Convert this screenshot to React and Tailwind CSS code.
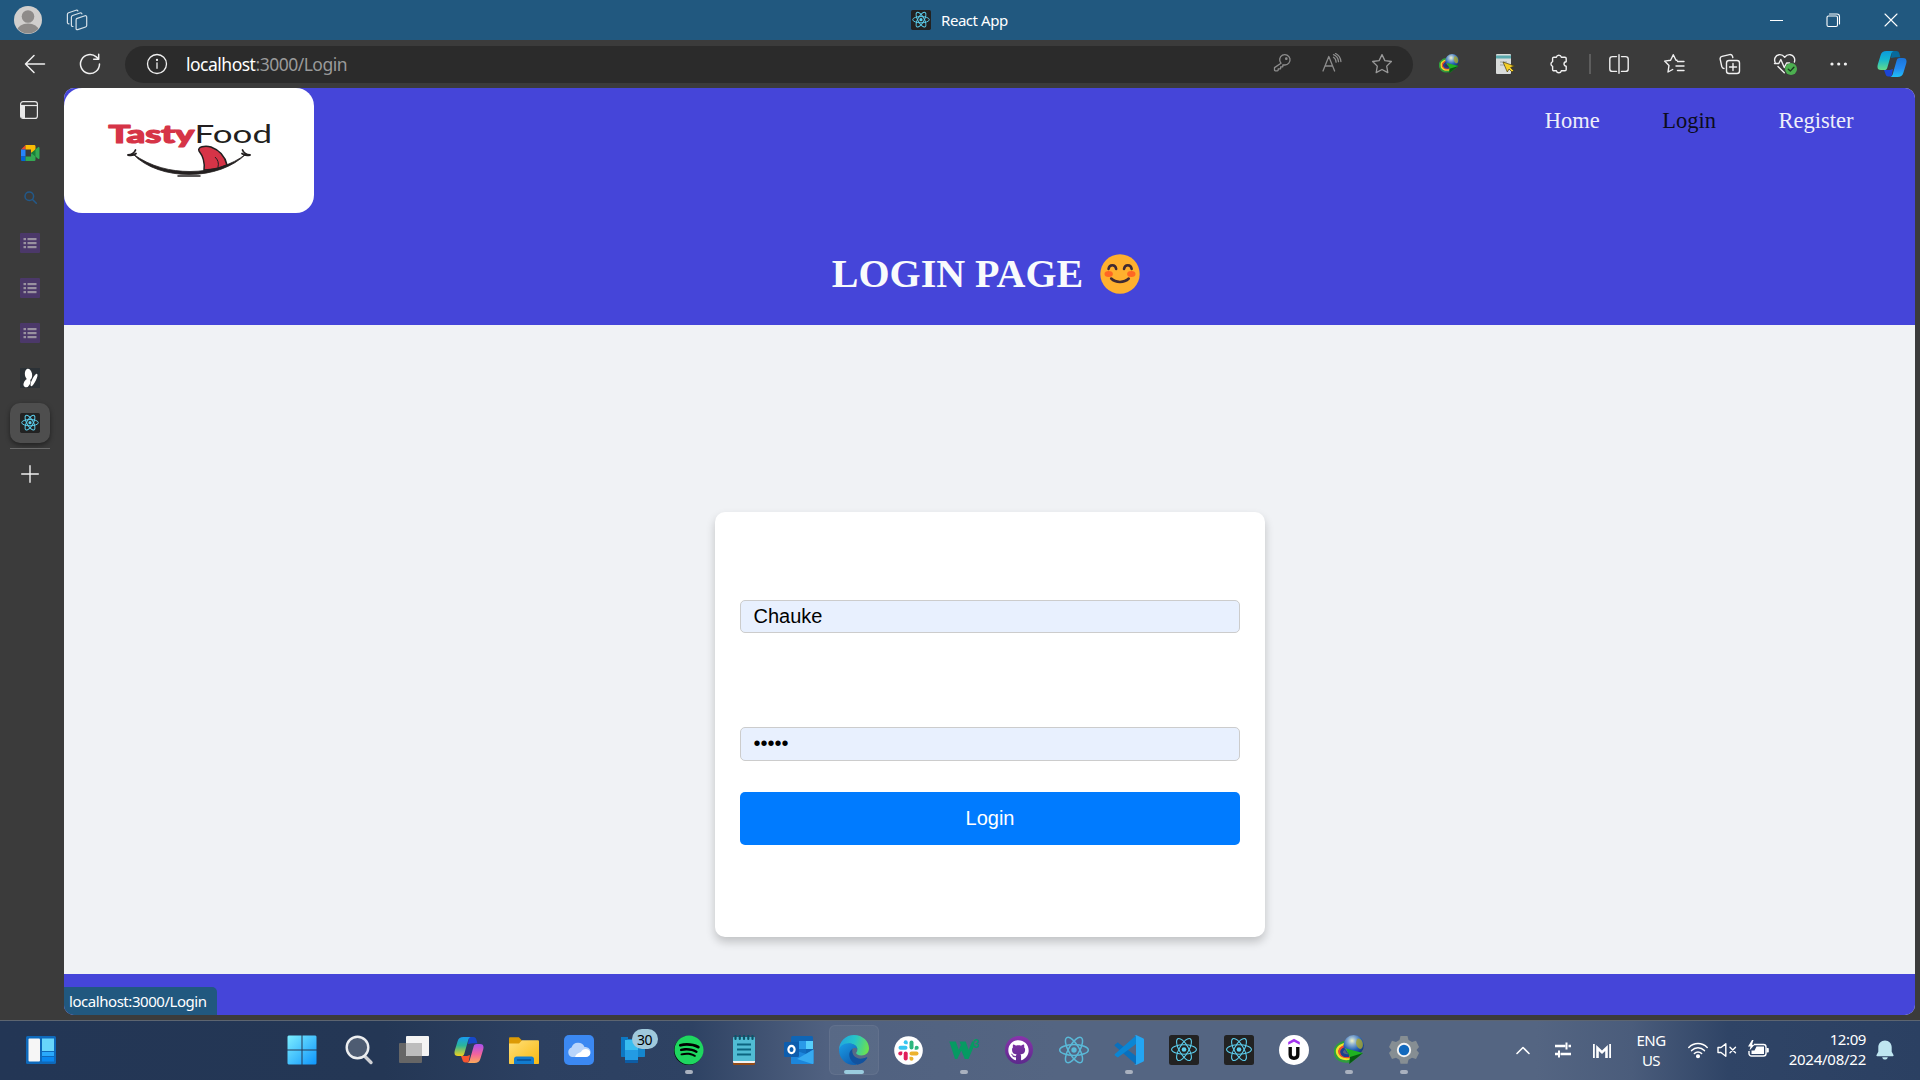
import React from "react";
import { FaSpotify, FaGithub } from "react-icons/fa";

const UI = "font-['Noto_Sans','Open_Sans',sans-serif]";

function Slot({ w, children, className = "" }) {
  return (
    <div className={"flex h-full shrink-0 items-center justify-center " + className} style={{ width: w }}>
      {children}
    </div>
  );
}

function Line({ size = 20, box = 20, color = "#f0f0f0", sw = 1.3, children, className = "" }) {
  return (
    <svg
      width={size}
      height={size}
      viewBox={`0 0 ${box} ${box}`}
      fill="none"
      stroke={color}
      strokeWidth={sw}
      strokeLinecap="round"
      strokeLinejoin="round"
      className={"shrink-0 " + className}
    >
      {children}
    </svg>
  );
}

function ReactLogo({ size, tile = true, sw = 1.3 }) {
  return (
    <svg width={size} height={size} viewBox="0 0 30 30" className="shrink-0">
      {tile && <rect width="30" height="30" rx="2.5" fill="#222222" />}
      <g fill="none" stroke="#5ccfee" strokeWidth={sw} transform={tile ? "translate(15 14.5) scale(.87)" : "translate(15 15)"} opacity={tile ? 1 : 0.8}>
        <ellipse rx="14.3" ry="5.4" />
        <ellipse rx="14.3" ry="5.4" transform="rotate(60)" />
        <ellipse rx="14.3" ry="5.4" transform="rotate(120)" />
        <circle r="2.7" fill="#5ccfee" stroke="none" />
      </g>
    </svg>
  );
}

function Copilot({ size, id, fold, colors }) {
  const [a, b, c, d, e, f] = colors;
  return (
    <svg width={size} height={size} viewBox="0 0 30 30" className="shrink-0">
      <defs>
        <linearGradient id={id + "l"} x1="0" y1="0" x2="0" y2="1">
          <stop offset="0" stopColor={a} />
          <stop offset=".45" stopColor={b} />
          <stop offset="1" stopColor={c} />
        </linearGradient>
        <linearGradient id={id + "r"} x1="0" y1="0" x2="0" y2="1">
          <stop offset="0" stopColor={d} />
          <stop offset=".55" stopColor={e} />
          <stop offset="1" stopColor={f} />
        </linearGradient>
      </defs>
      <path d="M15 2h4.2c2 0 2.8 1.200 3.300 3l.9 3.200h-4.800L14 9z" fill={fold[0]} />
      <path d="M7 21h6l3-1-1.500 7.500h-3.200c-1.700 0-2.500-1.200-3-3z" fill={fold[1]} />
      <path d="M9.500 2H17c-1.500 0-2.300 1.300-2.900 3.400l-3.800 13.300c-.5 1.600-1.300 2.400-3 2.400H4C.8 21.100-.1 19 .8 15.600L3.600 6.200C4.500 3.300 6.300 2 9.500 2z" fill={`url(#${id}l)`} />
      <path d="M20.500 28H13c1.500 0 2.300-1.300 2.900-3.400l3.800-13.300c.5-1.600 1.300-2.400 3-2.400H26c3.200 0 4.100 2.100 3.200 5.500l-2.800 9.400C25.500 26.700 23.700 28 20.500 28z" fill={`url(#${id}r)`} />
    </svg>
  );
}

function Globe({ size, id }) {
  return (
    <svg width={size} height={size} viewBox="0 0 30 30" className="shrink-0">
      <defs>
        <radialGradient id={id} cx=".42" cy=".28" r=".75">
          <stop offset="0" stopColor="#f4f5c8" />
          <stop offset=".25" stopColor="#8fb2d0" />
          <stop offset=".6" stopColor="#2763b8" />
          <stop offset="1" stopColor="#102c66" />
        </radialGradient>
      </defs>
      <g fill="none">
        <path d="M12 7C3 8-.8 14 1.500 20c2 5.500 8 7.500 14.500 6" stroke="#2f9f3d" strokeWidth="2.400" />
        <path d="M12 9C5 10 1.800 14.500 3.600 18.800c1.800 4 6.400 5.800 12.400 4.700" stroke="#ece528" strokeWidth="2.600" />
        <path d="M12 11c-5.500 1-7.500 4-6.300 7.100 1.300 3 5.300 4.500 10.300 3.600" stroke="#ee4d30" strokeWidth="2.400" />
        <path d="M12 13c-4.500 1-5 4-4 5.500 1 1.800 4 2.500 7 2" stroke="#1d3f8f" strokeWidth="2.800" />
      </g>
      <circle cx="19.700" cy="10.300" r="10.200" fill={`url(#${id})`} />
      <path d="M23 4c2-1.500 4 0 5 2s1.500 6-.5 7.500-4-1-5-3.500 0-4 .5-6zM11 13c2 1 5 1.500 6 4l-3 1z" fill="#a8a62d" opacity=".8" />
      <path d="M12 13.500l17 4.500-13.800 11 .8-7z" fill="#1fb322" />
      <path d="M16 22l13-4-13.800 11z" fill="#075a12" />
    </svg>
  );
}

function TitleBar() {
  return (
    <div className={"flex h-10 w-full shrink-0 bg-[#21587f] " + UI}>
      <div className="flex w-[911px] shrink-0 items-center pl-[14px]">
        <svg width="28" height="28" viewBox="0 0 28 28" className="shrink-0">
          <defs>
            <clipPath id="avatar">
              <circle cx="14" cy="14" r="13.600" />
            </clipPath>
          </defs>
          <circle cx="14" cy="14" r="14" fill="#d1cfcd" />
          <g fill="#8e8b89" clipPath="url(#avatar)">
            <circle cx="14" cy="10.500" r="6.300" />
            <ellipse cx="14" cy="24" rx="10.500" ry="6.500" />
          </g>
        </svg>
        <Line size={22} box={22} color="#d5e0e8" sw={1.200} className="ml-[24px]">
          <path d="M10.500 9.600l8.500-2.800c1.100-.3 1.700.1 1.700 1.200v8.500c0 .8-.4 1.300-1.100 1.500l-7.900 2.600c-1 .3-1.600-.1-1.600-1.100v-8.400c0-.8.100-1.200.4-1.500z" />
          <path d="M7 17.500c-1 .1-1.600-.3-1.600-1.200V8.200c0-.9.400-1.400 1.200-1.700L14 4c1-.3 1.700 0 1.900.8" />
          <path d="M3 14.800c-1 .1-1.600-.3-1.600-1.200V5.400c0-.9.400-1.400 1.200-1.700L10 1.200c1-.3 1.600 0 1.900.8" />
        </Line>
      </div>
      <div className="flex w-[98px] items-center gap-[10px]">
        <ReactLogo size={20} sw={1.600} />
        <span className="whitespace-nowrap pt-px text-[15px] tracking-[-0.450px] text-white">React App</span>
      </div>
      <div className="flex flex-1 justify-end">
        <Slot w={57}>
          <div className="h-px w-[13px] bg-white" />
        </Slot>
        <Slot w={57}>
          <Line size={15} box={15} color="#fff" sw={1.100}>
            <rect x="1" y="3" width="10.500" height="10.500" rx="1.500" />
            <path d="M3.500 1h7.500c1.600 0 2.500 1 2.500 2.500V11" />
          </Line>
        </Slot>
        <Slot w={58}>
          <Line size={14} box={14} color="#fff" sw={1.100}>
            <path d="M1 1l12 12M13 1L1 13" />
          </Line>
        </Slot>
      </div>
    </div>
  );
}

function Toolbar() {
  return (
    <div className={"flex h-12 w-full shrink-0 items-center bg-[#3b3b3b] " + UI}>
      <Slot w={70} className="pb-px">
        <Line size={22} box={22} sw={1.500}>
          <path d="M20.500 11H1.500M10 2.500L1.500 11l8.500 8.500" />
        </Line>
      </Slot>
      <Slot w={40}>
        <Line size={22} box={22} sw={1.500}>
          <path d="M20.500 11a9.500 9.500 0 1 1-3.200-7.100L19.700 6M19.700 1.300V6.300h-5" />
        </Line>
      </Slot>
      <div className="ml-[15px] flex h-[37px] w-[1288px] shrink-0 items-center rounded-full bg-[#2b2b2b] pr-[6px] pl-[21px]">
        <Line size={22} box={22} sw={1.300}>
          <circle cx="11" cy="11" r="9.500" />
          <path d="M11 9.800v5.500" />
          <circle cx="11" cy="6.900" r=".5" fill="#fff" />
        </Line>
        <div className="ml-[18px] whitespace-nowrap text-[17.500px] leading-6 tracking-[-0.500px] text-[#9a9a9a]">
          <span className="text-white">localhost</span>:3000/Login
        </div>
        <div className="ml-auto flex">
          <Slot w={51}>
            <Line size={20} color="#8d8d8d">
              <path d="M8 11.300A5.200 5.200 0 1 1 11.600 13H9.800v1.800H7.600v2H5.200v1.200c0 .5-.3.800-.8.800H2.300c-.5 0-.8-.3-.8-.8v-2.400z" transform="translate(1 -1)" />
              <circle cx="14.300" cy="5.700" r=".7" fill="#8d8d8d" />
            </Line>
          </Slot>
          <Slot w={50}>
            <Line size={20} color="#8d8d8d">
              <path d="M1 18L6.800 3.500 12.600 18M3 13h7.500M11.500 4.200c1.500.8 2.500 2.500 2.600 5M11.500 1.600c2.800 1 4.700 3.700 5 7M13.500.5c3.200 1.400 5 4.200 5.400 8" />
            </Line>
          </Slot>
          <Slot w={50}>
            <Line size={22} box={22} color="#9a9a9a">
              <path d="M11 1.600l2.900 6 6.500.9-4.700 4.600 1.100 6.500L11 16.500l-5.800 3.100 1.100-6.500L1.600 8.500l6.500-.9z" />
            </Line>
          </Slot>
        </div>
      </div>
      <div className="flex h-full flex-1 items-center pl-[9px]">
        <Slot w={54}>
          <Globe size={20} id="gl1" />
        </Slot>
        <Slot w={53}>
          <svg width="20" height="20" viewBox="0 0 20 20" className="ml-1">
            <rect x="1" y="0" width="15" height="20" rx="1" fill="#d9dcdb" />
            <rect x="1" y="1.500" width="15" height="3" fill="#5aa9ad" />
            <path d="M5 8h7M5 11h5" stroke="#9da3a3" />
            <path d="M8 8l11.500 4-4 1.500 3 3-1.500 1.500-3-3-1.700 3z" fill="#f5cf28" stroke="#473c10" strokeWidth=".7" />
          </svg>
        </Slot>
        <Slot w={60}>
          <Line size={20} sw={1.400}>
            <path d="M7.400 3.200a2.500 2.500 0 0 1 4.900 0h3.600c.8 0 1.300.5 1.300 1.300v3.300a2.200 2.200 0 1 0 0 4.400v3.300c0 .8-.5 1.300-1.300 1.300h-3.600a2.500 2.500 0 0 1-4.900 0H4.900c-.8 0-1.300-.5-1.300-1.300v-3.200a2.500 2.500 0 0 1 0-4.700V4.500c0-.8.500-1.300 1.300-1.300z" />
          </Line>
        </Slot>
        <div className="h-5 w-[2px] bg-[#5d5d5d]" />
        <Slot w={55}>
          <Line size={20} sw={1.400}>
            <path d="M7.500 2.600h-4C1.800 2.600.8 3.500.8 5.100v9.800c0 1.600 1 2.500 2.700 2.500h4M12.500 2.600h4c1.700 0 2.700.9 2.700 2.500v9.800c0 1.600-1 2.500-2.700 2.500h-4M10 .8v18.500" />
          </Line>
        </Slot>
        <Slot w={56}>
          <Line size={22} box={22} sw={1.400}>
            <path d="M14 7.300l-1-.1-2.700-5.500-2.700 5.500-6 .9 4.400 4.300-1 6.600 4.700-2.500M14.500 8.500H21M13 13h8M14.500 17.500H21" />
          </Line>
        </Slot>
        <Slot w={55}>
          <Line size={22} box={22} sw={1.400}>
            <rect x="7.500" y="7.500" width="13" height="13" rx="2.500" />
            <path d="M14 10.500v7M10.500 14h7M5 15.500c-1.200-.1-1.900-.8-2.200-1.900L1.200 6.300c-.3-1.500.3-2.500 1.800-2.900l7.500-1.800c1.500-.3 2.500.3 3 1.700l.3 1.200" />
          </Line>
        </Slot>
        <Slot w={56}>
          <Line size={25} box={25} sw={1.400}>
            <path d="M2.300 11C.5 7 2.500 3.300 6 2.700c2.500-.4 4.300.8 5.700 2.600 1.400-1.800 3.200-3 5.700-2.600 3.500.6 5 4 4 7.300M1.500 11.500h4.300l2-4 3.500 8 2.300-4.500h3M5 14.500l6.300 6.200" />
            <circle cx="18" cy="17" r="6" fill="#4caf50" stroke="none" />
            <path d="M15.300 17.200l2 1.900 3.600-3.900" stroke="#1c3a20" />
          </Line>
        </Slot>
        <Slot w={52}>
          <svg width="18" height="4" viewBox="0 0 18 4" fill="#f0f0f0">
            <circle cx="2" cy="2" r="1.600" />
            <circle cx="8.700" cy="2" r="1.600" />
            <circle cx="15.400" cy="2" r="1.600" />
          </svg>
        </Slot>
        <Slot w={54}>
          <Copilot size={30} id="cpt" fold={["#076a9b", "#1b45d8"]} colors={["#0b9bdc", "#15b6cf", "#66dc87", "#1a73d9", "#2489f0", "#1fc0f8"]} />
        </Slot>
      </div>
    </div>
  );
}

function ListTile() {
  return (
    <svg width="20" height="20" viewBox="0 0 20 20">
      <rect width="20" height="20" rx="1" fill="#4b3869" />
      <g fill="#99929f">
        <rect x="3.500" y="5" width="2.500" height="2.200" />
        <rect x="7.500" y="5" width="9" height="2.200" />
        <rect x="3.500" y="9" width="2.500" height="2.200" />
        <rect x="7.500" y="9" width="9" height="2.200" />
        <rect x="3.500" y="13" width="2.500" height="2.200" />
        <rect x="7.500" y="13" width="9" height="2.200" />
      </g>
    </svg>
  );
}

function SideBar() {
  const row = "flex h-[45px] shrink-0 items-center justify-center";
  return (
    <div className="flex w-16 shrink-0 flex-col bg-[#3b3b3b] pr-1">
      <div className="flex h-11 items-center justify-center">
        <svg width="18" height="18" viewBox="0 0 18 18" fill="none" stroke="#e8e8e8" strokeWidth="1.200" className="mr-[2px]">
          <rect x=".6" y=".6" width="16.800" height="16.800" rx="2.500" />
          <path d="M.6 4.500h16.800" />
          <path d="M1 4.500h4v12.500H2.500L1 16z" fill="#e8e8e8" stroke="none" />
        </svg>
      </div>
      <div className="flex h-[43px] items-center justify-center pb-[2px]">
        <svg width="20" height="16" viewBox="0 0 20 16">
          <path d="M1 4.500L5.500 0v4.500z" fill="#ea4335" />
          <path d="M5.500 0h8.500c1 0 1.500.5 1.500 1.500V6L11 8V4.500H5.500z" fill="#fbbc04" />
          <path d="M1 4.500h4.500v7H1z" fill="#2684fc" />
          <path d="M1 11.500h4.500V16H2.300C1.500 16 1 15.500 1 14.700z" fill="#0066da" />
          <path d="M5.500 11.500H11V8l4.500 2v4.500c0 1-.5 1.500-1.500 1.500H5.500z" fill="#34a853" />
          <path d="M11 8l7-5.700c.6-.5 1.400-.2 1.400.7v10c0 .9-.8 1.200-1.400.7z" fill="#188038" />
          <path d="M15.500 4.500l2.700-2.200c.6-.5 1.200-.2 1.200.7v10c0 .9-.6 1.200-1.200.7l-2.700-2.200z" fill="#34a853" />
        </svg>
      </div>
      <div className={row}>
        <Line size={13} box={13} color="#22598a" sw={1.500}>
          <circle cx="5.300" cy="5.300" r="4.300" />
          <path d="M8.500 8.500l3.800 3.800" />
        </Line>
      </div>
      <div className={row}><ListTile /></div>
      <div className={row}><ListTile /></div>
      <div className={row}><ListTile /></div>
      <div className={row}>
        <svg width="20" height="20" viewBox="0 0 20 20">
          <rect width="20" height="20" fill="#2b3136" />
          <ellipse cx="8.500" cy="6.500" rx="3.600" ry="5.800" fill="#fff" transform="rotate(-10 8.500 6.500)" />
          <ellipse cx="7" cy="15" rx="3" ry="4.500" fill="#fff" transform="rotate(28 7 15)" />
          <ellipse cx="14" cy="12" rx="1.900" ry="6.800" fill="#fff" transform="rotate(27 14 12)" />
        </svg>
      </div>
      <div className={row}>
        <div className="flex size-10 items-center justify-center rounded-[10px] bg-[#4e4e4e] shadow-[0_2px_5px_rgba(0,0,0,0.45)]">
          <ReactLogo size={20} sw={1.700} />
        </div>
      </div>
      <div className="mt-[3px] h-px w-10 self-center bg-[#6a6a6a]" />
      <div className="flex h-12 items-center justify-center pt-px">
        <Line size={18} box={18} sw={1.400} className="mr-px">
          <path d="M9 .7v16.600M.7 9h16.600" />
        </Line>
      </div>
    </div>
  );
}

function TastyFoodLogo() {
  return (
    <svg width="250" height="125" viewBox="0 0 250 125" className="rounded-[18px] bg-white">
      <g fontFamily="Lato, 'Open Sans', sans-serif">
        <text x="44.500" y="54.500" fontSize="25" fontWeight="900" fill="#d63447" stroke="#d63447" strokeWidth="1.200" strokeLinejoin="round" textLength="86" lengthAdjust="spacingAndGlyphs">
          Tasty
        </text>
        <text x="130.500" y="55" fontSize="25.500" fontWeight="400" fill="#231f20" textLength="77.500" lengthAdjust="spacingAndGlyphs">
          Food
        </text>
      </g>
      <path d="M135 63c-2-4 6-6 12-4 8 3 14 9 16 18-7 4-14 5-23 5 1-8-1-14-5-19z" fill="#d63447" stroke="#231f20" strokeWidth="1.500" />
      <path d="M151 69c3 3 4 6 3 10" fill="none" stroke="#231f20" strokeWidth="1" />
      <path d="M69 66c18 13 38 17.500 57 17.500 22 0 42-6.500 56-17.500-13 13-34 20.500-57 20.500-21 0-43-6.500-56-20.500z" fill="#231f20" stroke="#231f20" strokeWidth=".8" />
      <path d="M64 67c4-.5 6.500-2.500 7.500-5M64 67c3 .7 6 .3 8-1.500M186 67c-4-.5-6.500-2.500-7.500-5M186 67c-3 .7-6 .3-8-1.500" fill="none" stroke="#231f20" strokeWidth="1.800" strokeLinecap="round" />
      <path d="M114 88h22" stroke="#231f20" strokeWidth="1.500" strokeLinecap="round" />
    </svg>
  );
}

function Smile() {
  return (
    <svg width="40" height="40" viewBox="0 0 40 40" className="shrink-0">
      <circle cx="20" cy="20" r="19.700" fill="#ffb02e" />
      <ellipse cx="8.700" cy="20" rx="4.200" ry="3" fill="#ff6723" />
      <ellipse cx="31.300" cy="20" rx="4.200" ry="3" fill="#ff6723" />
      <g fill="none" stroke="#402a32" strokeWidth="2.500" strokeLinecap="round">
        <path d="M8.500 15c.7-5 7-5 7.700 0M24 15c.7-5 7-5 7.700 0M11.200 24.500c4.500 4.500 13 4.500 17.600 0" />
      </g>
    </svg>
  );
}

function WebPage() {
  const field = "flex w-[500px] shrink-0 items-start rounded-[5px] border border-[#ccc] bg-[#e8f0fe] px-[13px] text-[20px] leading-[30px] text-black";
  return (
    <div className="relative flex h-[927px] w-[1851px] shrink-0 flex-col overflow-hidden rounded-[10px] bg-[#f0f2f5]">
      <header className="flex h-[237px] shrink-0 flex-col bg-[#4545d9] font-['Liberation_Serif',serif]">
        <div className="flex h-[125px] justify-between">
          <TastyFoodLogo />
          <nav className="mr-[61.500px] flex gap-[62.500px] pt-[19px] text-[22.500px] leading-7 text-[#eeeefa]">
            <span>Home</span>
            <span className="text-[#0c0c1c]">Login</span>
            <span>Register</span>
          </nav>
        </div>
        <div className="mt-[38px] flex h-[46px] items-center justify-center gap-[17px] pr-[7px] text-[40px] font-bold text-[#f8fafc]">
          <h1 className="leading-[46px]">LOGIN PAGE</h1>
          <Smile />
        </div>
      </header>
      <main className="flex flex-1 flex-col items-center pt-[187px] font-['Liberation_Sans',sans-serif]">
        <form className="flex h-[425px] w-[550px] shrink-0 flex-col items-center rounded-[10px] bg-white pt-[88px] shadow-[0_5px_10px_rgba(0,0,0,0.2)]">
          <div className={field + " h-[33px]"}>Chauke</div>
          <div className={field + " mt-[94px] h-[34px]"}>•••••</div>
          <div className="mt-[31px] flex h-[53px] w-[500px] items-center justify-center rounded-[5px] bg-[#007bff] pb-[2px] pl-px text-[20px] text-white">Login</div>
        </form>
      </main>
      <footer className="h-[41px] shrink-0 bg-[#4545d9]" />
      <div className={"absolute bottom-0 left-0 flex h-7 w-[153px] items-center rounded-tr-[5px] bg-[#21587f] pt-px pl-[5px] text-[15px] tracking-[-0.450px] whitespace-nowrap text-white " + UI}>
        localhost:3000/Login
      </div>
    </div>
  );
}

function TaskApp({ children, mark, active }) {
  return (
    <div className="flex h-full w-[55px] shrink-0 flex-col items-center">
      <div className={"mt-1 flex h-[50px] w-[50px] flex-col items-center rounded-md " + (active ? "border border-white/5 bg-white/5 pt-[9px]" : "pt-[10px]")}>
        <div className="flex h-[30px] w-[30px] items-center justify-center">{children}</div>
        {mark && <div className={"mt-[5px] h-1 shrink-0 rounded-full " + (active ? "w-5 bg-[#9accdf]" : "w-2 bg-[#a9b1bf]")} />}
      </div>
    </div>
  );
}

function Apps() {
  return (
    <div className="flex h-full">
      <TaskApp>
        <svg width="30" height="30" viewBox="0 0 30 30" className="-ml-[3px]">
          <defs>
            <linearGradient id="win" gradientUnits="userSpaceOnUse" x1="0" y1="0" x2="30" y2="30">
              <stop offset="0" stopColor="#7ff0ff" />
              <stop offset="1" stopColor="#0c93fb" />
            </linearGradient>
          </defs>
          <path d="M1.500.5H14.500v14h-14v-13zM15.500.5h13l1 1v13h-14zM.5 15.500h14v14h-13l-1-1zM15.500 15.500h14v13l-1 1h-13z" fill="url(#win)" />
        </svg>
      </TaskApp>
      <TaskApp>
        <svg width="30" height="30" viewBox="0 0 30 30">
          <path d="M19 19.500l8 8" stroke="#cfd1d5" strokeWidth="3.400" strokeLinecap="round" />
          <circle cx="13.500" cy="12.500" r="10.800" fill="#4e5c72" stroke="#eceef0" strokeWidth="2.400" />
        </svg>
      </TaskApp>
      <TaskApp>
        <svg width="30" height="30" viewBox="0 0 30 30">
          <rect x="0" y="8" width="23" height="20" rx="1" fill="#666" />
          <rect x="7" y="1" width="23" height="20" rx="1" fill="#f4f4f4" />
          <path d="M7 8h16v13H8l-1-1z" fill="#bdbdbd" />
        </svg>
      </TaskApp>
      <TaskApp>
        <Copilot size={30} id="cpb" fold={["#1748c9", "#f6542f"]} colors={["#199bf0", "#2bb59a", "#f3d21b", "#a94ff0", "#f3659b", "#fbab5b"]} />
      </TaskApp>
      <TaskApp>
        <svg width="30" height="30" viewBox="0 0 30 30">
          <defs>
            <linearGradient id="fold" x1="0" y1="0" x2="1" y2="1">
              <stop offset="0" stopColor="#ffe07a" />
              <stop offset="1" stopColor="#f9b910" />
            </linearGradient>
          </defs>
          <path d="M0 3.500c0-.8.500-1.300 1.300-1.300h8.500L13 5.500v6H0z" fill="#dc9a05" />
          <path d="M0 8.500h10l3-3.300h15.700c.8 0 1.300.5 1.300 1.300V28c0 .6-.4 1-1 1H1c-.6 0-1-.4-1-1z" fill="url(#fold)" />
          <path d="M5 29v-5c0-1.500 1-2.500 2.500-2.500h15c1.500 0 2.500 1 2.500 2.500v5z" fill="#127cd0" />
          <path d="M8.500 25h13" stroke="#0a4e92" strokeWidth="1.500" strokeLinecap="round" />
        </svg>
      </TaskApp>
      <TaskApp>
        <svg width="30" height="30" viewBox="0 0 30 30">
          <rect width="30" height="30" rx="5" fill="#3b88f2" />
          <path d="M8 22a5 5 0 0 1-.5-9.500 7 7 0 0 1 13-.5c4 0 6 2.300 6 5a5 5 0 0 1-5 5z" fill="#b9d5fb" />
          <path d="M11 22c1-3 3.500-4 6-5 1.500-4 9-4 9.300 1 0 2.500-2 4-4.800 4z" fill="#fff" />
        </svg>
      </TaskApp>
      <TaskApp>
        <div className="relative">
          <svg width="30" height="30" viewBox="0 0 30 30">
            <path d="M2 2h7v20H3c-.7 0-1-.3-1-1z" fill="#0d78c3" />
            <path d="M8 4h18v17c0 .6-.4 1-1 1H8z" fill="#1487cf" />
            <path d="M6 5h13v21c0 1-.5 1.500-1.500 1.500h-10C6.500 27.500 6 27 6 26z" fill="#239be3" />
            <path d="M6 5h13v10H6z" fill="#38bdf0" />
            <path d="M6 25h13v2c0 .6-.4 1-1 1H7c-.6 0-1-.4-1-1z" fill="#0d5ca4" />
          </svg>
          <span className={"absolute -top-[6px] left-[13px] flex h-5 w-[26px] items-center justify-center rounded-full bg-[#9fc9dc] text-[14px] tracking-[-0.600px] text-black " + UI}>30</span>
        </div>
      </TaskApp>
      <TaskApp mark>
        <div className="flex size-[29px] items-center justify-center rounded-full bg-black">
          <FaSpotify size={30} color="#1ed760" className="shrink-0" />
        </div>
      </TaskApp>
      <TaskApp>
        <svg width="24" height="30" viewBox="0 0 24 30">
          <rect x="1" y="24" width="22" height="6" rx="1" fill="#934b16" />
          <rect x="1" y="3" width="22" height="25" rx="1" fill="#f2f2f2" />
          <path d="M1 3c0-.6.400-1 1-1h20c.6 0 1 .4 1 1v23H1z" fill="#51bcd4" />
          <path d="M3.500 1v3M7.800 1v3M12 1v3M16.300 1v3M20.500 1v3" stroke="#0c5368" strokeWidth="2.200" strokeLinecap="round" />
          <path d="M5 9.500h14M5 14.500h14M5 19.500h14" stroke="#0c6580" strokeWidth="1.800" />
        </svg>
      </TaskApp>
      <TaskApp>
        <svg width="30" height="30" viewBox="0 0 30 30">
          <rect x="7" y="1" width="22" height="22" rx="1.500" fill="#0f65b5" />
          <path d="M15 6h7v8h-7z" fill="#2a9ae8" />
          <path d="M22 6h7v8h-7z" fill="#56cffb" />
          <path d="M15 14h7v6h-7z" fill="#116fc2" />
          <path d="M7 14l15 5 7.500-4.500V28c0 .6-.4 1-1 1H8c-.6 0-1-.4-1-1z" fill="#1c86dc" />
          <path d="M29.500 14.500L13 24l15.500 5c.6 0 1-.4 1-1z" fill="#36aaf0" />
          <rect x="0" y="7" width="15" height="15" rx="1.200" fill="#0e5dad" />
          <ellipse cx="7.500" cy="14.500" rx="3.100" ry="3.700" fill="none" stroke="#fff" strokeWidth="2.200" />
        </svg>
      </TaskApp>
      <TaskApp mark active>
        <svg width="30" height="30" viewBox="0 0 24 24">
          <defs>
            <linearGradient id="edgeA" x1="0" y1=".3" x2="1" y2=".5">
              <stop offset="0" stopColor="#21a5df" />
              <stop offset=".5" stopColor="#27c5c7" />
              <stop offset="1" stopColor="#6be24f" />
            </linearGradient>
            <linearGradient id="edgeB" x1="0" y1="0" x2=".6" y2="1">
              <stop offset="0" stopColor="#1a9de6" />
              <stop offset="1" stopColor="#1062b4" />
            </linearGradient>
          </defs>
          <path d="M0 12C0 5 5.500 0 12 0c7 0 12 5.200 12 10.500 0 3.500-2.500 5.800-6 5.800-3 0-4.300-1-4.300-1.900 0-.6 1-1.100 1-2.900 0-2.400-2.500-4.500-6-4.500C4 7 1 9.500 0 12z" fill="url(#edgeA)" />
          <path d="M0 12.200C.3 9 3.500 6.500 7.500 6.500c4 0 7.200 2 7.200 5-.5-1-2-1.400-3.200-1C8 11.600 8.500 19.500 14 23.800c-.7.200-1.300.2-2 .2A12 12 0 0 1 0 12.200z" fill="url(#edgeB)" />
          <path d="M10.800 11c-2 1.300-3 3.500-2.500 6 .7 3.300 3.500 6 6.500 6.700 3.300-.8 6-2.500 7.700-5.200.3-.6-.2-.9-.6-.7-1.700.8-3 1.100-4.600 1.100-4.500 0-7.500-3.500-6.500-7.900z" fill="#12529e" />
        </svg>
      </TaskApp>
      <TaskApp>
        <svg width="29" height="29" viewBox="0 0 29 29">
          <circle cx="14.500" cy="14.500" r="14.300" fill="#fff" />
          <g fill="none" strokeWidth="4" strokeLinecap="round">
            <path d="M6.500 11.700h5" stroke="#36c5f0" />
            <path d="M17.500 6.500v5" stroke="#2eb67d" />
            <path d="M17.500 17.500h5" stroke="#ecb22e" />
            <path d="M11.700 17.500v5" stroke="#e01e5a" />
          </g>
          <path d="M11.700 4.300a2 2 0 0 1 2 2v2h-2a2 2 0 0 1 0-4z" fill="#36c5f0" />
          <path d="M24.700 11.700a2 2 0 0 1-2 2h-2v-2a2 2 0 0 1 4 0z" fill="#2eb67d" />
          <path d="M17.500 24.700a2 2 0 0 1-2-2v-2h2a2 2 0 0 1 0 4z" fill="#ecb22e" />
          <path d="M4.300 17.500a2 2 0 0 1 2-2h2v2a2 2 0 0 1-4 0z" fill="#e01e5a" />
        </svg>
      </TaskApp>
      <TaskApp mark>
        <svg width="30" height="30" viewBox="0 0 30 30">
          <path d="M.3 6.500h6.500l3 8.500 2-5-1.300-3.500h6.200l3 8.500 3.300-8.500h2.500l-.5 4.500-5.500 13h-3.700l-3.500-8.500-4 8.500H6z" fill="#069a62" />
          <text x="23.500" y="12.500" fontSize="12" fontWeight="700" fontFamily="Liberation Sans, sans-serif" fill="#069a62">3</text>
        </svg>
      </TaskApp>
      <TaskApp>
        <div className="flex size-7 items-center justify-center rounded-full bg-linear-to-b from-[#8a33ac] to-[#5c2a8c]">
          <FaGithub size={21} color="#fff" />
        </div>
      </TaskApp>
      <TaskApp>
        <ReactLogo size={30} tile={false} sw={1.500} />
      </TaskApp>
      <TaskApp mark>
        <svg width="30" height="30" viewBox="0 0 30 30">
          <path d="M1 9.500l2-1.600c.5-.4 1-.4 1.500 0L22 21v8.500L.900 11c-.5-.5-.4-1 .1-1.500z" fill="#0a70bd" />
          <path d="M1 20.500l2 1.600c.5.400 1 .4 1.500 0L22 9V.5L.900 19c-.5.500-.4 1 .1 1.500z" fill="#0b86d4" />
          <path d="M22 0l7 3.200c.7.300 1 .8 1 1.500v20.600c0 .7-.3 1.200-1 1.500L22 30c-.8.200-1.500 0-2-.6.800.6 2 .1 2-1V1.600C22 .5 20.800 0 20 .6c.5-.6 1.200-.8 2-.6z" fill="#24a5f2" />
        </svg>
      </TaskApp>
      <TaskApp><ReactLogo size={30} sw={1.200} /></TaskApp>
      <TaskApp><ReactLogo size={30} sw={1.200} /></TaskApp>
      <TaskApp>
        <svg width="30" height="30" viewBox="0 0 30 30">
          <circle cx="15" cy="15" r="15" fill="#fff" />
          <path d="M9.200 7L15 3.800 20.800 7v2.800L15 6.800 9.200 9.800z" fill="#a435f0" />
          <path d="M11.200 12v7.500c0 2.500 1.300 3.700 3.800 3.700s3.800-1.200 3.800-3.700V12" fill="none" stroke="#0a0a0a" strokeWidth="3.400" />
        </svg>
      </TaskApp>
      <TaskApp mark><Globe size={30} id="gl2" /></TaskApp>
      <TaskApp mark>
        <svg width="30" height="30" viewBox="0 0 30 30">
          <path d="M11.500 1h7l1 4 3.500 2 4-1.200 3 6.200-2.500 3 2.500 3-3 6-4-1.200-3.500 2-1 4h-7l-1-4-3.500-2L3 24l-3-6 2.500-3L0 12l3-6.200L7 7l3.500-2z" fill="#868e93" />
          <circle cx="15" cy="15" r="6.200" fill="#1269bd" stroke="#f4f4f4" strokeWidth="1.900" />
        </svg>
      </TaskApp>
    </div>
  );
}

function TaskBar() {
  return (
    <div className={"flex h-[60px] w-full shrink-0 border-t border-[#5d6570] bg-[linear-gradient(90deg,#233655_0%,#243755_20%,#2c4061_28%,#2e4263_36%,#506180_43%,#546582_55%,#546582_80%,#4a5c7b_85%,#2f4466_90%,#2b4062_100%)] text-white " + UI}>
      <div className="w-[276px] pt-[15px] pl-[26px]">
        <svg width="30" height="28" viewBox="0 0 30 28">
          <rect width="30" height="28" rx="1.500" fill="#0e69bb" />
          <rect x="2.500" y="2.500" width="11.500" height="23" rx="1" fill="#f6f6f6" />
          <path d="M16 2.500h12v12.500H16z" fill="#68d6fb" />
          <path d="M16 16h12v4H16z" fill="#2aa9fb" />
          <path d="M16 21h12v4.500H16z" fill="#0a87ee" />
        </svg>
      </div>
      <Apps />
      <div className="ml-auto flex h-full items-center pr-[26px] pb-[2px]">
        <Slot w={40}>
          <Line size={14} box={14} color="#fff" sw={1.600}>
            <path d="M1 10.500l6-6 6 6" />
          </Line>
        </Slot>
        <Slot w={40}>
          <svg width="18" height="16" viewBox="0 0 18 16" fill="none" stroke="#fff" strokeWidth="2.600">
            <path d="M1 4h10.500M14.500 4H17M1 12h3M6.500 12H17" />
            <path d="M12.500.500v7M5 8.500v7" strokeWidth="2" />
          </svg>
        </Slot>
        <Slot w={38}>
          <svg width="18" height="14" viewBox="0 0 18 14" fill="#fff" className="mt-[2px]">
            <path d="M0 0h1.800v14H0zM16.200 0H18v14h-1.800zM3.200 1L9 6.500 14.800 1v13h-2.600V7L9 10 5.800 7v7H3.200z" />
          </svg>
        </Slot>
        <div className="mr-[16px] ml-[14px] flex w-[32px] flex-col items-center text-[15px] leading-5 tracking-[-0.500px]">
          <span>ENG</span>
          <span>US</span>
        </div>
        <Slot w={29}>
          <Line size={20} color="#fff" sw={1.500}>
            <path d="M.8 7.500c5.200-5.300 13.200-5.300 18.400 0M3.600 10.600c3.600-3.700 9.200-3.700 12.800 0M6.400 13.500c2-2.100 5.200-2.100 7.200 0" />
            <circle cx="10" cy="16.300" r="1.300" fill="#fff" />
          </Line>
        </Slot>
        <Slot w={30}>
          <Line size={20} color="#fff" sw={1.400}>
            <path d="M1 7.500h3L8.800 3.800v12.400L4 12.500H1zM13 7.200l5.500 5.600M18.500 7.200L13 12.800" />
          </Line>
        </Slot>
        <Slot w={32}>
          <svg width="21" height="18" viewBox="0 0 21 18" className="-mt-[2px]">
            <path d="M6 4.500h9.500A2.500 2.500 0 0 1 18 7v6.500a2.500 2.500 0 0 1-2.500 2.500h-12A2.500 2.500 0 0 1 1 13.500V11" fill="none" stroke="#fff" strokeWidth="1.400" />
            <path d="M8.500 6.500H16v7.500H3.500v-3.500h3zM18.500 8H20a.8.800 0 0 1 .8.800v3a.8.800 0 0 1-.8.800h-1.500zM4 0L0 6.500h2.500L1.500 10.500 6.500 4.800H4L5.500 0z" fill="#fff" />
          </svg>
        </Slot>
        <div className="ml-[8px] flex w-[84px] flex-col items-end pb-[2px] text-[15px] leading-5 tracking-[-0.250px]">
          <span className="tracking-[-0.400px]">12:09</span>
          <span>2024/08/22</span>
        </div>
        <svg width="18" height="20" viewBox="0 0 18 20" className="ml-[10px]" fill="#bfe6f1">
          <path d="M9 .5c4 0 6.700 3 6.700 6.800v4.500l1.800 3.300c.3.600 0 1.100-.7 1.100H1.200c-.7 0-1-.5-.7-1.100l1.800-3.300V7.300C2.300 3.500 5 .5 9 .5zM6.200 17.200h5.600c-.3 1.500-1.400 2.300-2.800 2.300s-2.500-.8-2.800-2.300z" />
        </svg>
      </div>
    </div>
  );
}

export default function App() {
  return (
    <div className="flex h-[1080px] w-[1920px] flex-col overflow-hidden bg-[#3b3b3b]">
      <TitleBar />
      <Toolbar />
      <div className="flex h-[932px] shrink-0">
        <SideBar />
        <WebPage />
      </div>
      <TaskBar />
    </div>
  );
}
